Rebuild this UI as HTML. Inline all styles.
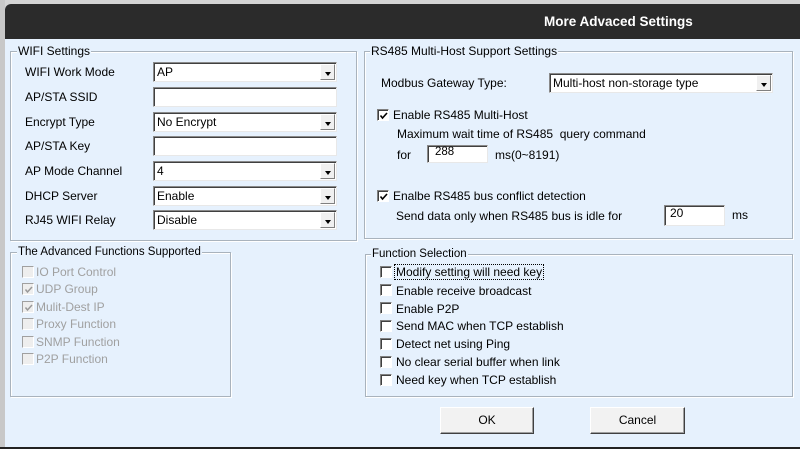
<!DOCTYPE html>
<html><head><meta charset="utf-8"><style>
*{box-sizing:border-box;margin:0;padding:0}
body{width:800px;height:449px;overflow:hidden;background:#d4d4d4;font-family:"Liberation Sans",sans-serif;font-size:12px;color:#000;position:relative}
.a{position:absolute;white-space:nowrap}
#dlg{position:absolute;left:5px;top:4px;width:800px;height:443px;background:#e6f1fd;border-radius:6px 0 0 0;overflow:hidden}
#title{position:absolute;left:0;top:0;width:100%;height:35px;background:#2b2b2b;color:#fff;font-weight:bold;font-size:13.5px}
.grp{position:absolute;border:1px solid #a9b3bd;box-shadow:inset 1px 1px 0 #fff,1px 1px 0 #fff}
.lg{position:absolute;background:#e6f1fd;padding:0 1px;line-height:13px}
.sel,.inp{position:absolute;background:#fff;border:1px solid;border-color:#8a8a8a #e8e8e8 #e8e8e8 #8a8a8a;box-shadow:inset 1px 1px 0 #404040;padding-left:3px;line-height:18px;font-size:12px}
.sel .ar{position:absolute;right:1px;top:1px;bottom:1px;width:15px;background:#f0f0f0;border:1px solid;border-color:#fff #808080 #808080 #fff}
.sel .ar:after{content:"";position:absolute;left:4px;top:7px;border-left:3px solid transparent;border-right:3px solid transparent;border-top:4px solid #000}
.cb{position:absolute;width:12px;height:12px;background:#fff;border:1px solid;border-color:#808080 #fff #fff #808080;box-shadow:inset 1px 1px 0 #404040}
.cb.dis{background:#eee}
.cb svg{position:absolute;left:1px;top:1px}
.g{color:#a0a0a0}
.btn{position:absolute;background:#f2f2f2;border:1px solid;border-color:#fff #404040 #404040 #fff;box-shadow:inset -1px -1px 0 #a0a0a0;text-align:center;line-height:25px}
</style></head><body>
<div class="a" style="left:0;top:0;width:5px;height:449px;background:#c8c8c8"></div>
<div class="a" style="left:0;top:447px;width:800px;height:2px;background:#222"></div>
<div id="dlg">
<div id="title"><span class="a" style="left:539px;top:10px">More Advaced Settings</span></div>
</div>

<!-- WIFI -->
<div class="grp" style="left:10px;top:51px;width:347px;height:190px"></div>
<div class="lg" style="left:17px;top:45px">WIFI Settings</div>
<div class="a" style="left:25px;top:65px">WIFI Work Mode</div>
<div class="a" style="left:25px;top:90px">AP/STA SSID</div>
<div class="a" style="left:25px;top:115px">Encrypt Type</div>
<div class="a" style="left:25px;top:139px">AP/STA Key</div>
<div class="a" style="left:25px;top:164px">AP Mode Channel</div>
<div class="a" style="left:25px;top:189px">DHCP Server</div>
<div class="a" style="left:25px;top:213px">RJ45 WIFI Relay</div>
<div class="sel" style="left:153px;top:62px;width:184px;height:20px">AP<span class="ar"></span></div>
<div class="inp" style="left:153px;top:87px;width:184px;height:20px"></div>
<div class="sel" style="left:153px;top:112px;width:184px;height:20px">No Encrypt<span class="ar"></span></div>
<div class="inp" style="left:153px;top:136px;width:184px;height:20px"></div>
<div class="sel" style="left:153px;top:161px;width:184px;height:20px">4<span class="ar"></span></div>
<div class="sel" style="left:153px;top:186px;width:184px;height:20px">Enable<span class="ar"></span></div>
<div class="sel" style="left:153px;top:210px;width:184px;height:20px">Disable<span class="ar"></span></div>

<!-- RS485 -->
<div class="grp" style="left:364px;top:51px;width:429px;height:188px"></div>
<div class="lg" style="left:370px;top:45px">RS485 Multi-Host Support Settings</div>
<div class="a" style="left:381px;top:76px">Modbus Gateway Type:</div>
<div class="sel" style="left:549px;top:73px;width:224px;height:20px">Multi-host non-storage type<span class="ar"></span></div>
<div class="cb" style="left:377px;top:109px"><svg width="10" height="10"><path d="M1.5 4.5 L3.5 7 L8 2" stroke="#000" stroke-width="1.6" fill="none"/></svg></div>
<div class="a" style="left:393px;top:108px">Enable RS485 Multi-Host</div>
<div class="a" style="left:397px;top:127px">Maximum wait time of RS485&nbsp; query command</div>
<div class="a" style="left:397px;top:148px">for</div>
<div class="inp" style="left:427px;top:145px;width:61px;height:18px;line-height:13px;font-size:11.5px;padding-left:7px">288</div>
<div class="a" style="left:495px;top:148px">ms(0~8191)</div>
<div class="cb" style="left:377px;top:190px"><svg width="10" height="10"><path d="M1.5 4.5 L3.5 7 L8 2" stroke="#000" stroke-width="1.6" fill="none"/></svg></div>
<div class="a" style="left:393px;top:189px">Enalbe RS485 bus conflict detection</div>
<div class="a" style="left:396px;top:209px">Send data only when RS485 bus is idle for</div>
<div class="inp" style="left:664px;top:205px;width:61px;height:21px;line-height:14px;padding-left:5px">20</div>
<div class="a" style="left:732px;top:208px">ms</div>

<!-- Advanced -->
<div class="grp" style="left:10px;top:252px;width:221px;height:145px"></div>
<div class="lg" style="left:17px;top:246px;font-size:11.5px">The Advanced Functions Supported</div>
<div class="cb dis" style="left:22px;top:266px;box-shadow:none;border-color:#a0a0a0 #fff #fff #a0a0a0"></div><div class="a g" style="left:36px;top:265px">IO Port Control</div>
<div class="cb dis" style="left:22px;top:283px;box-shadow:none;border-color:#a0a0a0 #fff #fff #a0a0a0"><svg width="10" height="10"><path d="M1.5 4.5 L3.5 7 L8 2" stroke="#999" stroke-width="1.5" fill="none"/></svg></div><div class="a g" style="left:36px;top:282px">UDP Group</div>
<div class="cb dis" style="left:22px;top:301px;box-shadow:none;border-color:#a0a0a0 #fff #fff #a0a0a0"><svg width="10" height="10"><path d="M1.5 4.5 L3.5 7 L8 2" stroke="#999" stroke-width="1.5" fill="none"/></svg></div><div class="a g" style="left:36px;top:300px">Mulit-Dest IP</div>
<div class="cb dis" style="left:22px;top:318px;box-shadow:none;border-color:#a0a0a0 #fff #fff #a0a0a0"></div><div class="a g" style="left:36px;top:317px">Proxy Function</div>
<div class="cb dis" style="left:22px;top:336px;box-shadow:none;border-color:#a0a0a0 #fff #fff #a0a0a0"></div><div class="a g" style="left:36px;top:335px">SNMP Function</div>
<div class="cb dis" style="left:22px;top:353px;box-shadow:none;border-color:#a0a0a0 #fff #fff #a0a0a0"></div><div class="a g" style="left:36px;top:352px">P2P Function</div>

<!-- Function Selection -->
<div class="grp" style="left:365px;top:254px;width:428px;height:143px"></div>
<div class="lg" style="left:371px;top:248px;font-size:11.5px">Function Selection</div>
<div class="cb" style="left:380px;top:266px"></div><div class="a" style="left:395px;top:265px;outline:1px dotted #000;padding:0 1px">Modify setting will need key</div>
<div class="cb" style="left:380px;top:284px"></div><div class="a" style="left:396px;top:284px">Enable receive broadcast</div>
<div class="cb" style="left:380px;top:302px"></div><div class="a" style="left:396px;top:302px">Enable P2P</div>
<div class="cb" style="left:380px;top:320px"></div><div class="a" style="left:396px;top:319px">Send MAC when TCP establish</div>
<div class="cb" style="left:380px;top:338px"></div><div class="a" style="left:396px;top:337px">Detect net using Ping</div>
<div class="cb" style="left:380px;top:356px"></div><div class="a" style="left:396px;top:355px">No clear serial buffer when link</div>
<div class="cb" style="left:380px;top:374px"></div><div class="a" style="left:396px;top:373px">Need key when TCP establish</div>

<div class="btn" style="left:440px;top:407px;width:94px;height:27px">OK</div>
<div class="btn" style="left:590px;top:407px;width:95px;height:27px">Cancel</div>
</body></html>
